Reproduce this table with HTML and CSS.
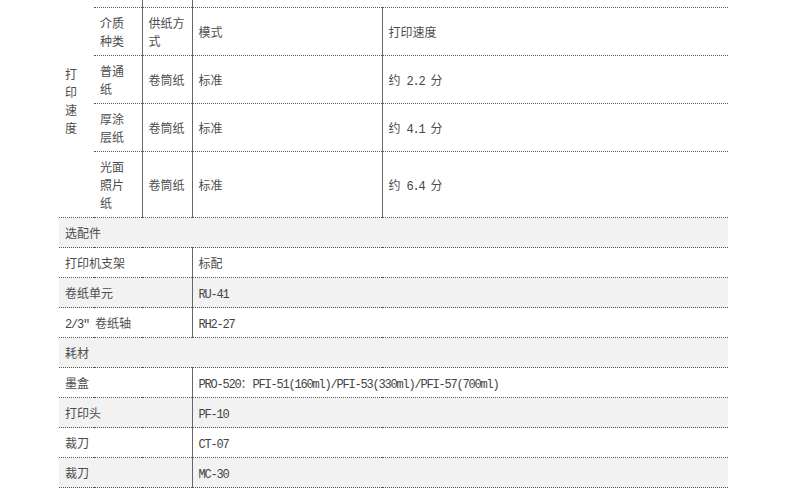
FILE: index.html
```html
<!DOCTYPE html>
<html lang="zh-CN">
<head>
<meta charset="utf-8">
<title>规格</title>
<link rel="stylesheet" href="styles.css">
</head>
<body>
<div class="wrap">
<table class="spec">
  <colgroup>
    <col class="c1"><col class="c2"><col class="c3"><col class="c4"><col class="c5">
  </colgroup>
  <tbody>
    <tr class="cut">
      <td class="side" rowspan="5"><div class="stack">打印速度</div></td>
      <td class="v"></td>
      <td class="v"></td>
      <td colspan="2"></td>
    </tr>
    <tr>
      <td class="v">介质种类</td>
      <td class="v">供纸方式</td>
      <td class="v">模式</td>
      <td>打印速度</td>
    </tr>
    <tr>
      <td class="v">普通纸</td>
      <td class="v">卷筒纸</td>
      <td class="v">标准</td>
      <td>约<span class="en"> 2.2 </span>分</td>
    </tr>
    <tr>
      <td class="v">厚涂层纸</td>
      <td class="v">卷筒纸</td>
      <td class="v">标准</td>
      <td>约<span class="en"> 4.1 </span>分</td>
    </tr>
    <tr>
      <td class="v">光面照片纸</td>
      <td class="v">卷筒纸</td>
      <td class="v">标准</td>
      <td>约<span class="en"> 6.4 </span>分</td>
    </tr>
    <tr class="head">
      <td colspan="5">选配件</td>
    </tr>
    <tr>
      <td class="v" colspan="3">打印机支架</td>
      <td colspan="2">标配</td>
    </tr>
    <tr class="alt">
      <td class="v" colspan="3">卷纸单元</td>
      <td colspan="2"><span class="en">RU-41</span></td>
    </tr>
    <tr>
      <td class="v" colspan="3"><span class="en">2/3" </span>卷纸轴</td>
      <td colspan="2"><span class="en">RH2-27</span></td>
    </tr>
    <tr class="head">
      <td colspan="5">耗材</td>
    </tr>
    <tr>
      <td class="v" colspan="3">墨盒</td>
      <td colspan="2"><span class="en">PRO-520</span>：<span class="en">PFI-51(160ml)/PFI-53(330ml)/PFI-57(700ml)</span></td>
    </tr>
    <tr class="alt">
      <td class="v" colspan="3">打印头</td>
      <td colspan="2"><span class="en">PF-10</span></td>
    </tr>
    <tr>
      <td class="v" colspan="3">裁刀</td>
      <td colspan="2"><span class="en">CT-07</span></td>
    </tr>
    <tr class="alt">
      <td class="v" colspan="3">裁刀</td>
      <td colspan="2"><span class="en">MC-30</span></td>
    </tr>
  </tbody>
</table>
</div>
</body>
</html>
```

FILE: styles.css
```css
html, body {
  margin: 0;
  padding: 0;
  background: #ffffff;
}

body {
  font-family: "Noto Sans CJK SC", "Noto Sans", sans-serif;
  font-size: 12px;
  color: #4d4d4d;
}

.wrap {
  padding-left: 59px;
  overflow: hidden;
  height: 503px;
}

.spec {
  margin-top: -16px;
  width: 669px;
  table-layout: fixed;
  border-collapse: collapse;
}

.c1 { width: 35px; }
.c2 { width: 48px; }
.c3 { width: 50px; }
.c4 { width: 190px; }
.c5 { width: 346px; }

.spec td {
  padding: 6px 6px 5px 6px;
  line-height: 18px;
  vertical-align: middle;
  text-align: left;
  border-bottom: 1px dotted #555555;
  word-break: break-all;
}

.spec td.v {
  border-right: 1px solid #666666;
}

.stack {
  width: 12px;
}

.spec tr.cut td {
  height: 23px;
  padding: 0;
}

.spec tr.cut td.side {
  padding: 6px 6px 5px 6px;
}

.spec tr.head td,
.spec tr.alt td {
  background: #f2f2f2;
}

.en {
  font-family: "Liberation Mono", monospace;
  font-size: 12px;
  letter-spacing: -1.2px;
  line-height: 12px;
  white-space: pre;
  color: #444444;
}
```
